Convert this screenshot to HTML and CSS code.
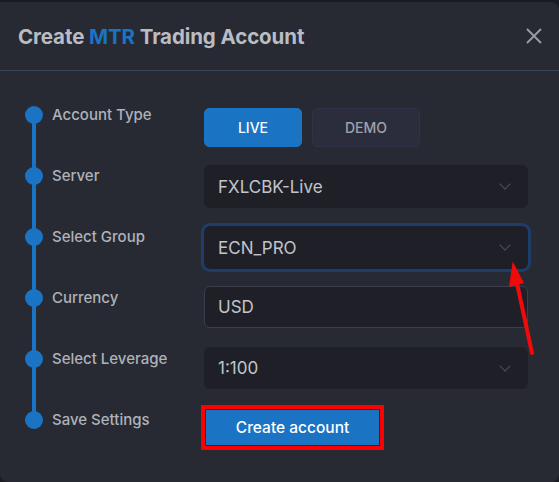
FILE: index.html
```html
<!DOCTYPE html>
<html lang="en">
<head>
    <meta charset="UTF-8">
    <title>Create MTR Trading Account</title>
    <link rel="stylesheet" href="styles.css">
</head>
<body>
    <div class="modal">
        <div class="modal-header">
            <h2>Create <span class="brand">MTR</span> Trading Account</h2>
            <svg class="close" width="18" height="18" viewBox="0 0 18 18">
                <path d="M2 2 L16 16 M16 2 L2 16" stroke="#9a9da5" stroke-width="1.8" fill="none"/>
            </svg>
        </div>

        <div class="modal-body">
            <ul class="steps">
                <li>Account Type</li>
                <li>Server</li>
                <li>Select Group</li>
                <li>Currency</li>
                <li>Select Leverage</li>
                <li>Save Settings</li>
            </ul>

            <div class="form">
                <div class="toggle">
                    <button class="tab active">LIVE</button>
                    <button class="tab">DEMO</button>
                </div>
                <div class="select">FXLCBK-Live <span class="chev"></span></div>
                <div class="select focused">ECN_PRO <span class="chev"></span></div>
                <div class="input">USD</div>
                <div class="select short">1:100 <span class="chev"></span></div>
                <div class="highlight">
                    <button class="create">Create account</button>
                </div>
            </div>
        </div>

        <svg class="annot-arrow" width="40" height="110" viewBox="0 0 40 110">
            <line x1="32" y1="101" x2="15" y2="22" stroke="#f00a0a" stroke-width="4" stroke-linecap="round"/>
            <polygon points="12.7,9.5 9,35 24,31" fill="#f00a0a"/>
        </svg>
    </div>
</body>
</html>
```

FILE: styles.css
```css
body { margin: 0; background: #1b1c21; font-family: Inter, "Noto Sans", sans-serif; }
.modal { position: relative; margin-top: 2px; width: 559px; height: 480px; background: #272a33; border-radius: 0 8px 8px 8px; overflow: hidden; }

.modal-header { height: 68px; border-bottom: 1px solid #3a4658; display: flex; align-items: center; justify-content: space-between; padding: 0 16px 0 18px; }
.modal-header h2 { margin: 0; font-size: 20.5px; font-weight: 700; color: #b9bcc3; letter-spacing: -0.1px; }
.brand { color: #1b73c4; }

.modal-body { display: flex; padding-top: 36px; }

.steps { list-style: none; margin: -4px 0 0; padding: 0; width: 204px; position: relative; }
.steps::before { content: ""; position: absolute; left: 32px; top: 8px; width: 4px; height: 305px; background: #1b73c4; }
.steps li { position: relative; height: 61px; padding-left: 52px; line-height: 24px; font-size: 15px; font-weight: 500; color: #afb2b9; }
.steps li::before { content: ""; position: absolute; left: 25px; top: 3px; width: 18px; height: 18px; border-radius: 50%; background: #1b73c4; }

.form { width: 324px; display: flex; flex-direction: column; padding-top: 1px; }
.toggle { display: flex; gap: 10px; margin-bottom: 18px; }
.tab { height: 39px; border-radius: 5px; font-family: inherit; font-size: 14px; font-weight: 500; border: 1px solid #30324a; background: #2b2d3d; color: #9fa2ab; width: 108px; }
.tab.active { width: 98px; background: #1b73c4; border-color: #1b73c4; color: #fff; }

.select, .input { height: 43px; box-sizing: border-box; border-radius: 6px; background: #1f2027; display: flex; align-items: center; padding: 0 14px; font-size: 17px; color: #c2c5cb; position: relative; margin-bottom: 18px; }
.select.focused { box-shadow: 0 0 0 3px #1f3d69; margin-bottom: 17px; }
.select.short { height: 42px; }
.input { height: 42px; border: 1px solid #3a3f4b; padding-left: 13px; margin-bottom: 19px; }
.chev { position: absolute; right: 19px; top: 15px; width: 7px; height: 7px; border-right: 1.5px solid #4b4e58; border-bottom: 1.5px solid #4b4e58; transform: rotate(45deg); }

.highlight { align-self: flex-start; margin-left: -3px; margin-top: -2px; border: 4px solid #ff0000; padding: 1px; }
.create { display: block; width: 173px; height: 35px; border: none; background: #1b73c4; color: #fff; font-family: inherit; font-size: 15.5px; font-weight: 500; }

.annot-arrow { position: absolute; left: 500px; top: 250px; }
```
